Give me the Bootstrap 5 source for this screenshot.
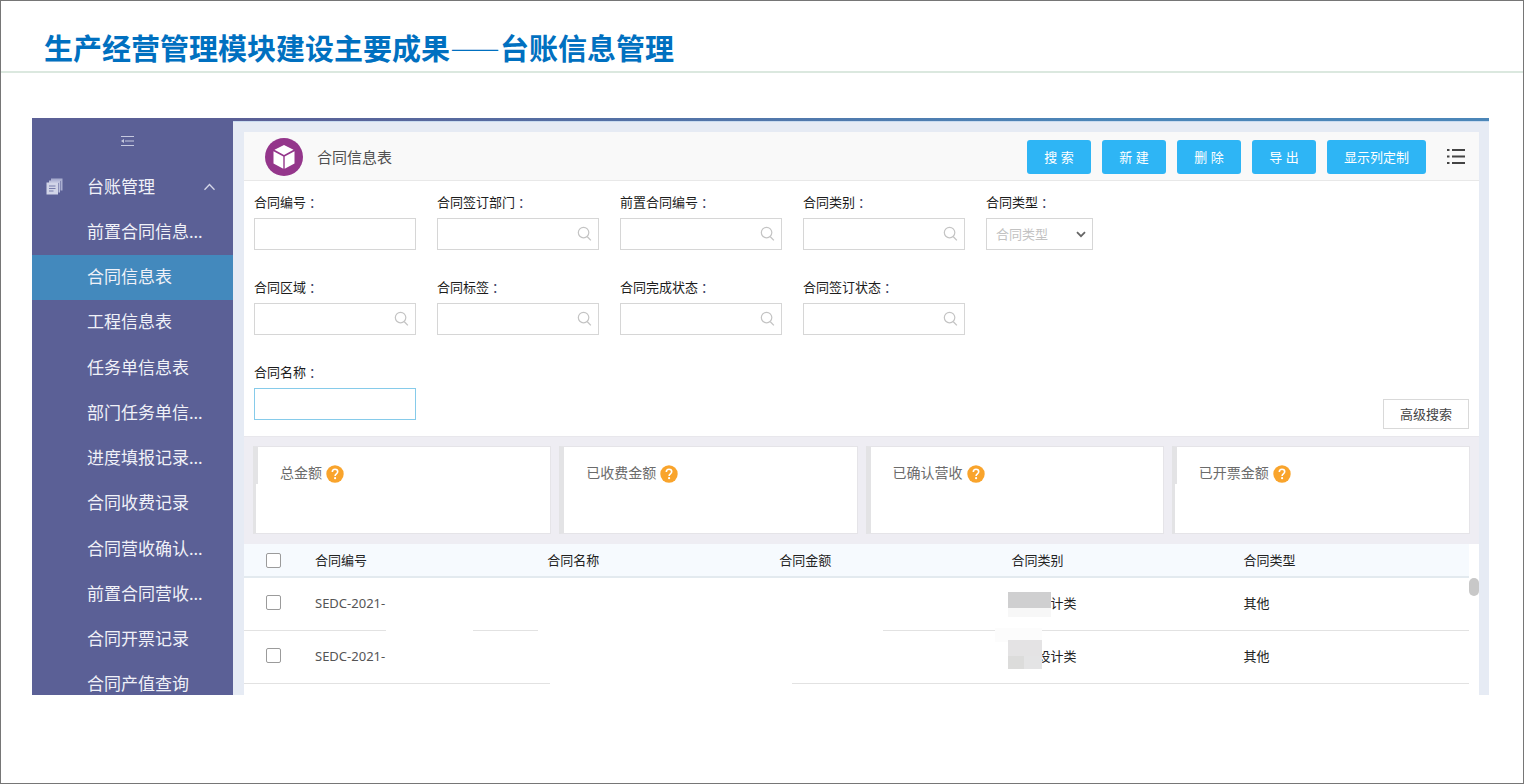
<!DOCTYPE html>
<html lang="zh-CN">
<head>
<meta charset="utf-8">
<meta name="viewport" content="width=device-width, initial-scale=1">
<title>台账信息管理</title>
<link href="https://cdn.jsdelivr.net/npm/bootstrap@5.3.0/dist/css/bootstrap.min.css" rel="stylesheet">
<style>
  body { font-family: "Noto Sans", "Noto Sans CJK SC", sans-serif; font-size: 13px; line-height: 20px; color: #222; }
  .slide { border: 1px solid #767676; background: #fff; }
  .slide-head { height: 72px; padding: 25px 43px 0; border-bottom: 2px solid #dbe8df; }
  .slide-head h1 { font-family: "Noto Sans CJK SC", sans-serif; font-size: 29px; line-height: 42px; font-weight: 700; color: #0070c0; }
  .slide-head h1 span { font-size: 25px; }
  .app { margin: 45px 34px 88px 31px; background: #e6ebf4; }
  .side { width: 201px; background: #5b6096; }
  .fold { height: 46px; padding-left: 88px; }
  .menu { display: grid; grid-auto-rows: 1fr; height: 543px; font-size: 17px; }
  .menu a { display: flex; align-items: center; padding-left: 55px; color: #f0f1f8; text-decoration: none; white-space: nowrap; }
  .menu a.group { padding: 0 17px 0 14px; }
  .menu a.group span { margin-left: 24px; }
  .menu a.on { background: #4389bd; }
  .strip { height: 4px; background: linear-gradient(90deg, #5b6096, #4b86b8 70%); border-bottom: 1px solid #c9dbef; }
  .panel { margin: 10px 10px 0 11px; background: #fff; }
  .panel-head { height: 49px; padding: 1px 14px 0 21px; background: #f9f9f9; border-bottom: 1px solid #e8e8e8; }
  .panel-head h2 { font-size: 15px; line-height: 20px; font-weight: 400; color: #505050; margin-left: 14px; }
  .tools { gap: 11px; }
  .tools .btn-act { min-width: 64px; height: 34px; padding: 0 17px; font-size: 13px; line-height: 34px; color: #fff; background: #2eb5f5; border: 0; border-radius: 3px; }
  .tools .btn-list { margin-left: 10px; }
  .filters { padding: 11px 10px 7px; }
  .fields { display: grid; grid-template-columns: repeat(5, 162px); gap: 27px 21px; margin-bottom: 9px; }
  .fields label { display: block; height: 20px; margin-bottom: 6px; white-space: nowrap; color: #1c1c1c; }
  .fields label span { padding-left: 3px; color: #446; }
  .fields .form-control, .fields .form-select { height: 32px; border: 1px solid #d6d6d6; border-radius: 0; font-size: 13px; line-height: 20px; padding: 5px 9px; }
  .fields .form-select { width: 107px; color: #c2c2c2; padding-right: 24px; background-image: none; }
  .fields .current { border-color: #86cbea; }
  .in-icon { position: absolute; right: 7px; top: 8px; pointer-events: none; }
  .in-arrow { position: absolute; left: 90px; top: 13px; pointer-events: none; }
  .btn-more { height: 30px; padding: 0 16px; font-size: 13px; line-height: 28px; border: 1px solid #d9d9d9; border-radius: 0; color: #444; background: #fff; }
  .stats { display: grid; grid-template-columns: repeat(4, 1fr); gap: 8px; padding: 9px 9px 10px; background: #eeedf3; border-top: 1px solid #e8e7ec; }
  .stat { position: relative; height: 88px; padding: 16px 0 0 22px; background: #fff; border: 1px solid #e5e4e8; border-left: 5px solid #e3e3e5; font-size: 14px; color: #6b6b6b; }
  .stat.wide::before { content: ""; position: absolute; left: -2px; top: 37px; bottom: 0; width: 2px; background: #fff; }
  .stat svg { margin-left: 4px; }
  .grid-table { table-layout: fixed; font-size: 13px; line-height: 20px; color: #222; }
  .grid-table th, .grid-table td { padding: 0; vertical-align: middle; white-space: nowrap; font-weight: 400; position: relative; }
  .grid-table th { height: 33px; background: #f6fafe; border-bottom: 2px solid #e3eaef; }
  .grid-table td { height: 53px; padding-bottom: 2px; border-bottom: 1px solid #e2e2e2; }
  .grid-table .pick { width: 71px; }
  .grid-table .data { width: 18.95%; }
  .grid-table .form-check-input { display: block; width: 15px; height: 15px; margin: 0 0 0 22px; border: 1px solid #9b9b9b; border-radius: 2px; }
  .grid-table .code { color: #555; }
  .cover { position: absolute; background: #fff; }
  .c-code { left: 71px; width: 87px; top: 0; bottom: -2px; }
  .c-name { left: -9px; width: 345px; top: 0; bottom: -2px; }
  .c-wide { left: 3px; width: 242px; top: 0; bottom: -2px; }
  .c-kind { left: -16px; width: 47px; bottom: -12px; height: 14px; background: #fcfcfc; z-index: 1; }
  .mosaic-a { left: -3px; top: 14px; width: 43px; height: 25px; background: linear-gradient(#cfcfd0 16px, #f7f7f7 16px); }
  .mosaic-b { left: -3px; top: 9px; width: 34px; height: 29px; z-index: 2; background: linear-gradient(90deg, #dcdcdb 16px, #e4e4e5 16px) 0 16px no-repeat, #e4e3e4; }
  .blank { display: inline-block; width: 39px; }
  .gap-half { display: inline-block; width: 26px; }
  .rail { width: 10px; padding-top: 34px; }
  .thumb { height: 18px; border-radius: 5px; background: #c8c8c8; }
</style>
</head>
<body>
<svg class="d-none">
  <symbol id="lens" viewBox="0 0 16 16"><circle cx="7" cy="7" r="5.6" fill="none" stroke="#c4c4c4" stroke-width="1.3"/><path d="M11 11.5l3.8 3.8" stroke="#c4c4c4" stroke-width="1.4" fill="none"/></symbol>
  <symbol id="help" viewBox="0 0 18 18"><circle cx="9" cy="9" r="8.7" fill="#f9a42c"/><path d="M6.3 7.1C6.3 5.3 7.5 4.3 9 4.3s2.7 1 2.7 2.5c0 2-2.6 2.1-2.6 4.1" fill="none" stroke="#fff" stroke-width="1.6"/><circle cx="9.1" cy="13.2" r="1.1" fill="#fff"/></symbol>
</svg>
<div class="slide vh-100 d-flex flex-column">
  <header class="slide-head flex-shrink-0"><h1 class="m-0">生产经营管理模块建设主要成果<span>——</span>台账信息管理</h1></header>
  <div class="app d-flex flex-grow-1 overflow-hidden">
    <nav class="side flex-shrink-0">
      <div class="fold d-flex align-items-center">
        <svg width="15" height="12" viewBox="0 0 15 12" fill="none" stroke="#c6c9df"><path d="M1 1.5h13M5 6h9M1 10.5h13"/><path d="M4 4v4L1 6z" fill="#c6c9df" stroke="none"/></svg>
      </div>
      <div class="menu">
        <a href="#" class="group">
          <svg width="17" height="17" viewBox="0 0 17 17"><path d="M5 .5h11.500v12h-2V3H5z" fill="#a9add0"/><path d="M3 2.500h11v12h-1.500V5H3z" fill="#bcc0dc"/><path d="M.5 4.500h11.500v12H.5z" fill="#d2d5e8"/><path d="M3 8h6.500M3 10.500h6.500M3 13h4.500" stroke="#777cab" fill="none"/></svg>
          <span>台账管理</span>
          <svg class="ms-auto" width="13" height="8" viewBox="0 0 13 8"><path d="M1.500 6.800L6.500 1.500l5 5.300" fill="none" stroke="#d5d7e8" stroke-width="1.300"/></svg>
        </a>
        <a href="#">前置合同信息...</a>
        <a href="#" class="on">合同信息表</a>
        <a href="#">工程信息表</a>
        <a href="#">任务单信息表</a>
        <a href="#">部门任务单信...</a>
        <a href="#">进度填报记录...</a>
        <a href="#">合同收费记录</a>
        <a href="#">合同营收确认...</a>
        <a href="#">前置合同营收...</a>
        <a href="#">合同开票记录</a>
        <a href="#">合同产值查询</a>
      </div>
    </nav>
    <main class="flex-grow-1 d-flex flex-column">
      <div class="strip flex-shrink-0"></div>
      <section class="panel flex-grow-1">
        <div class="panel-head d-flex align-items-center">
          <svg width="38" height="38" viewBox="0 0 38 38"><circle cx="19" cy="19" r="19" fill="#94368b"/><path d="M19 7l9.500 4.800L19 17l-9.500-5.200z" fill="#fff"/><path d="M8.500 13.300l9.800 5.300v12.200l-9.800-5.200zM29.500 13.300l-9.800 5.300v12.200l9.800-5.200z" fill="#fff"/></svg>
          <h2 class="mb-0">合同信息表</h2>
          <div class="tools d-flex align-items-center ms-auto">
            <button type="button" class="btn btn-act">搜 索</button>
            <button type="button" class="btn btn-act">新 建</button>
            <button type="button" class="btn btn-act">删 除</button>
            <button type="button" class="btn btn-act">导 出</button>
            <button type="button" class="btn btn-act">显示列定制</button>
            <button type="button" class="btn btn-list p-0 border-0 d-flex" aria-label="列表">
              <svg width="18" height="18" viewBox="0 0 18 18" stroke="#444" stroke-width="2" fill="none"><path d="M0 2h2.500M5 2h13M0 8.500h2.500M5 8.500h13M0 15h2.500M5 15h13"/></svg>
            </button>
          </div>
        </div>
        <form class="filters d-flex justify-content-between align-items-end">
          <div class="fields">
            <div><label for="f1">合同编号<span>：</span></label><input id="f1" class="form-control"></div>
            <div><label for="f2">合同签订部门<span>：</span></label><div class="position-relative"><input id="f2" class="form-control"><svg class="in-icon" width="15" height="15"><use href="#lens"/></svg></div></div>
            <div><label for="f3">前置合同编号<span>：</span></label><div class="position-relative"><input id="f3" class="form-control"><svg class="in-icon" width="15" height="15"><use href="#lens"/></svg></div></div>
            <div><label for="f4">合同类别<span>：</span></label><div class="position-relative"><input id="f4" class="form-control"><svg class="in-icon" width="15" height="15"><use href="#lens"/></svg></div></div>
            <div><label for="f5">合同类型<span>：</span></label><div class="position-relative"><select id="f5" class="form-select"><option>合同类型</option></select><svg class="in-arrow" width="10" height="7" viewBox="0 0 10 7"><path d="M1 1.200l4 4 4-4" fill="none" stroke="#666" stroke-width="1.800"/></svg></div></div>
            <div><label for="f6">合同区域<span>：</span></label><div class="position-relative"><input id="f6" class="form-control"><svg class="in-icon" width="15" height="15"><use href="#lens"/></svg></div></div>
            <div><label for="f7">合同标签<span>：</span></label><div class="position-relative"><input id="f7" class="form-control"><svg class="in-icon" width="15" height="15"><use href="#lens"/></svg></div></div>
            <div><label for="f8">合同完成状态<span>：</span></label><div class="position-relative"><input id="f8" class="form-control"><svg class="in-icon" width="15" height="15"><use href="#lens"/></svg></div></div>
            <div><label for="f9">合同签订状态<span>：</span></label><div class="position-relative"><input id="f9" class="form-control"><svg class="in-icon" width="15" height="15"><use href="#lens"/></svg></div></div>
            <div></div>
            <div><label for="f10">合同名称<span>：</span></label><input id="f10" class="form-control current"></div>
          </div>
          <button type="button" class="btn btn-more">高级搜索</button>
        </form>
        <div class="stats">
          <div class="stat wide">总金额<svg width="18" height="18"><use href="#help"/></svg></div>
          <div class="stat">已收费金额<svg width="18" height="18"><use href="#help"/></svg></div>
          <div class="stat">已确认营收<svg width="18" height="18"><use href="#help"/></svg></div>
          <div class="stat wide">已开票金额<svg width="18" height="18"><use href="#help"/></svg></div>
        </div>
        <div class="d-flex">
          <table class="grid-table flex-grow-1 w-100">
            <thead>
              <tr>
                <th class="pick"><input type="checkbox" class="form-check-input" aria-label="全选"></th>
                <th class="data">合同编号</th><th class="data">合同名称</th><th class="data">合同金额</th><th class="data">合同类别</th><th>合同类型</th>
              </tr>
            </thead>
            <tbody>
              <tr>
                <td><input type="checkbox" class="form-check-input" aria-label="选择第一行"></td>
                <td class="code">SEDC-2021-<span class="cover c-code"></span></td>
                <td><span class="cover c-name"></span></td>
                <td></td>
                <td><span class="blank"></span>计类<span class="cover c-kind"></span><span class="cover mosaic-a"></span></td>
                <td>其他</td>
              </tr>
              <tr>
                <td><input type="checkbox" class="form-check-input" aria-label="选择第二行"></td>
                <td class="code">SEDC-2021-</td>
                <td><span class="cover c-wide"></span></td>
                <td></td>
                <td><span class="gap-half"></span>设计类<span class="cover mosaic-b"></span></td>
                <td>其他</td>
              </tr>
            </tbody>
          </table>
          <div class="rail flex-shrink-0"><div class="thumb"></div></div>
        </div>
      </section>
    </main>
  </div>
</div>
<script src="https://cdn.jsdelivr.net/npm/bootstrap@5.3.0/dist/js/bootstrap.bundle.min.js"></script>
</body>
</html>
